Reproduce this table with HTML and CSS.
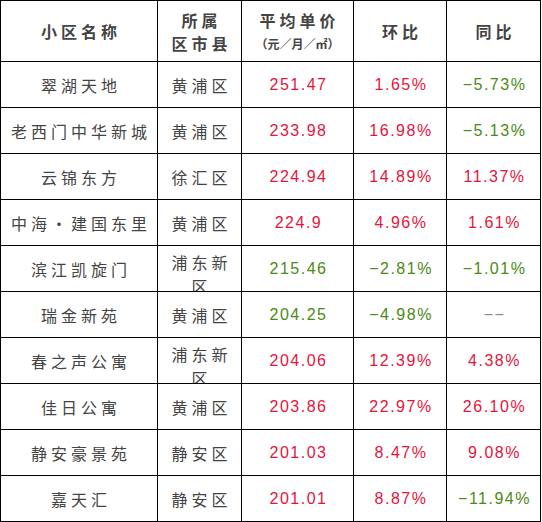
FILE: index.html
```html
<!DOCTYPE html>
<html lang="zh-CN">
<head>
<meta charset="utf-8">
<link rel="stylesheet" href="styles.css">
</head>
<body>
<div class="sheet">
  <div class="cell head">小区名称</div>
  <div class="cell head two"><span>所属</span><span>区市县</span></div>
  <div class="cell head two"><span>平均单价</span><span class="unit">（元／月／㎡）</span></div>
  <div class="cell head">环比</div>
  <div class="cell head">同比</div>

  <div class="cell name">翠湖天地</div><div class="cell dist">黄浦区</div><div class="cell num red">251.47</div><div class="cell num red">1.65%</div><div class="cell num green">−5.73%</div>
  <div class="cell name">老西门中华新城</div><div class="cell dist">黄浦区</div><div class="cell num red">233.98</div><div class="cell num red">16.98%</div><div class="cell num green">−5.13%</div>
  <div class="cell name">云锦东方</div><div class="cell dist">徐汇区</div><div class="cell num red">224.94</div><div class="cell num red">14.89%</div><div class="cell num red">11.37%</div>
  <div class="cell name">中海•建国东里</div><div class="cell dist">黄浦区</div><div class="cell num red">224.9</div><div class="cell num red">4.96%</div><div class="cell num red">1.61%</div>
  <div class="cell name">滨江凯旋门</div><div class="cell dist wrap">浦东新区</div><div class="cell num green">215.46</div><div class="cell num green">−2.81%</div><div class="cell num green">−1.01%</div>
  <div class="cell name">瑞金新苑</div><div class="cell dist">黄浦区</div><div class="cell num green">204.25</div><div class="cell num green">−4.98%</div><div class="cell num gray">−−</div>
  <div class="cell name">春之声公寓</div><div class="cell dist wrap">浦东新区</div><div class="cell num red">204.06</div><div class="cell num red">12.39%</div><div class="cell num red">4.38%</div>
  <div class="cell name">佳日公寓</div><div class="cell dist">黄浦区</div><div class="cell num red">203.86</div><div class="cell num red">22.97%</div><div class="cell num red">26.10%</div>
  <div class="cell name">静安豪景苑</div><div class="cell dist">静安区</div><div class="cell num red">201.03</div><div class="cell num red">8.47%</div><div class="cell num red">9.08%</div>
  <div class="cell name">嘉天汇</div><div class="cell dist">静安区</div><div class="cell num red">201.01</div><div class="cell num red">8.87%</div><div class="cell num green">−11.94%</div>
</div>
</body>
</html>
```
FILE: styles.css
```css
* { box-sizing: border-box; }
html, body { margin: 0; padding: 0; background: #fff; }
.sheet {
  display: grid;
  grid-template-columns: 156px 83px 111px 92px 93px;
  grid-template-rows: 60px repeat(10, 45px);
  gap: 1px;
  padding: 1px;
  width: 541px;
  height: 522px;
  background: #000;
  font-family: "Noto Sans CJK SC", sans-serif;
  color: #444;
}
.cell {
  background: #fff;
  display: flex;
  align-items: center;
  justify-content: center;
  overflow: hidden;
  font-size: 16px;
  line-height: 24px;
  letter-spacing: 4px;
  text-align: center;
  padding-left: 4px;
}
.head { font-weight: bold; letter-spacing: 4px; }
.head.two { flex-direction: column; line-height: 23px; padding-top: 1px; }
.head .unit { font-size: 12px; letter-spacing: 0; padding-right: 4px; white-space: nowrap; }
.dist.wrap { align-items: flex-start; padding: 4px 6px 0 10px; }
.num {
  font-family: "Liberation Sans", sans-serif;
  letter-spacing: 1.5px;
  padding-left: 2px;
}
.red { color: #e5143c; }
.green { color: #4b8a14; }
.gray { color: #8a8a8a; }
```
